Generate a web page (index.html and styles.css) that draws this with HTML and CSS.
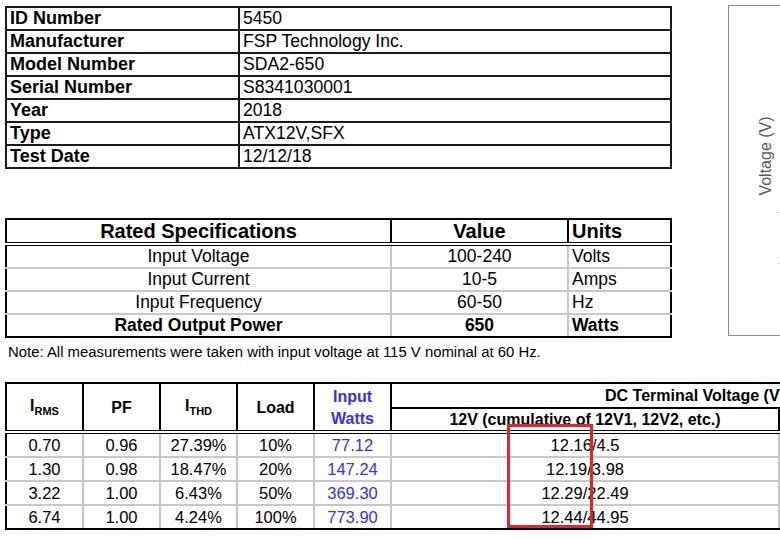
FILE: index.html
```html
<html>
    <head>
        <link rel="stylesheet" href="styles.css">
        <title>PSU Report 5450</title>
    </head>
    <body>
    <div id="page">
        <div id="top">
            <div id="left">
                <table class="info">
                    <tr><td class="lbl">ID Number</td><td>5450</td></tr>
                    <tr><td class="lbl">Manufacturer</td><td>FSP Technology Inc.</td></tr>
                    <tr><td class="lbl">Model Number</td><td>SDA2-650</td></tr>
                    <tr><td class="lbl">Serial Number</td><td>S8341030001</td></tr>
                    <tr><td class="lbl">Year</td><td>2018</td></tr>
                    <tr><td class="lbl">Type</td><td>ATX12V,SFX</td></tr>
                    <tr><td class="lbl">Test Date</td><td>12/12/18</td></tr>
                </table>

                <table class="rated">
                    <tr class="head">
                        <th class="c1">Rated Specifications</th>
                        <th class="c2">Value</th>
                        <th class="c3">Units</th>
                    </tr>
                    <tr><td class="c1">Input Voltage</td><td class="c2">100-240</td><td class="c3">Volts</td></tr>
                    <tr><td class="c1">Input Current</td><td class="c2">10-5</td><td class="c3">Amps</td></tr>
                    <tr><td class="c1">Input Frequency</td><td class="c2">60-50</td><td class="c3">Hz</td></tr>
                    <tr class="bold"><td class="c1">Rated Output Power</td><td class="c2">650</td><td class="c3">Watts</td></tr>
                </table>

                <p class="note">Note: All measurements were taken with input voltage at 115 V nominal at 60 Hz.</p>
            </div>

            <div id="chart">
                <span class="ylabel">Voltage (V)</span>
                <span class="tick t1"></span>
                <span class="tick t2"></span>
            </div>
        </div>

        <div id="perf-wrap">
            <table class="perf">
                <colgroup>
                    <col class="small"><col class="small"><col class="small"><col class="small"><col class="small">
                    <col class="wide">
                    <col class="rest">
                </colgroup>
                <tr class="h1">
                    <th rowspan="2">I<sub>RMS</sub></th>
                    <th rowspan="2">PF</th>
                    <th rowspan="2">I<sub>THD</sub></th>
                    <th rowspan="2">Load</th>
                    <th rowspan="2" class="blue">Input<br>Watts</th>
                    <th colspan="2" class="dc">DC Terminal Voltage (V)</th>
                </tr>
                <tr class="h2">
                    <th>12V (cumulative of 12V1, 12V2, etc.)</th>
                    <th>5V</th>
                </tr>
                <tr><td>0.70</td><td>0.96</td><td>27.39%</td><td>10%</td><td class="blue">77.12</td><td>12.16/4.5</td><td></td></tr>
                <tr><td>1.30</td><td>0.98</td><td>18.47%</td><td>20%</td><td class="blue">147.24</td><td>12.19/3.98</td><td></td></tr>
                <tr><td>3.22</td><td>1.00</td><td>6.43%</td><td>50%</td><td class="blue">369.30</td><td>12.29/22.49</td><td></td></tr>
                <tr><td>6.74</td><td>1.00</td><td>4.24%</td><td>100%</td><td class="blue">773.90</td><td>12.44/44.95</td><td></td></tr>
            </table>
            <div class="mark"></div>
        </div>
    </div>
    </body>
</html>
```

FILE: styles.css
```css
body{
    margin: 0;
    width: 780px;
    height: 538px;
    overflow: hidden;
    font-family: "Liberation Sans", Arial, sans-serif;
    color: #000;
    background: #fff;
}
#page{
    padding: 5px 0 0 5px;
}
#top{
    display: flex;
    align-items: flex-start;
}
#left{
    width: 667px;
    flex-shrink: 0;
}
table{
    border-collapse: collapse;
}
td, th{
    padding: 0;
}

/* id / model table */
.info{
    width: 667px;
    margin-top: 1px;
    border: 2px solid #000;
}
.info td{
    border: 2px solid #1a1a1a;
    height: 21px;
    line-height: 21px;
    padding: 0 3px;
    font-size: 17.6px;
    vertical-align: bottom;
}
.info .lbl{
    width: 225px;
    font-weight: bold;
    font-size: 18px;
}

/* rated specs */
.rated{
    width: 667px;
    margin-top: 49px;
    border: 2px solid #000;
}
.rated th{
    height: 22px;
    line-height: 22px;
    font-size: 20px;
    border: 2px solid #000;
    border-bottom: 4px double #000;
}
.rated td{
    height: 21px;
    line-height: 21px;
    font-size: 17.5px;
    border: 2px solid #c8c8c8;
    text-align: center;
}
.rated tr:last-child td{
    border-bottom: 2px solid #000;
}
.rated .c1{ width: 383px; }
.rated .c2{ width: 175px; }
.rated .c3{ text-align: left; padding-left: 3px; }
.rated .bold td{ font-weight: bold; }
.rated td.c1{ border-left: 2px solid #000; }
.rated td.c3{ border-right: 2px solid #000; }

.note{
    margin: 5px 0 0 3px;
    font-size: 14.9px;
    line-height: 18px;
}

/* chart frame on the right */
#chart{
    position: relative;
    margin-left: 56px;
    width: 100px;
    height: 329px;
    border: 1px solid #8c8c8c;
    border-right: none;
    flex-shrink: 0;
}
.ylabel{
    position: absolute;
    left: 37px;
    top: 150px;
    font-size: 16px;
    color: #595959;
    white-space: nowrap;
    transform: translate(-50%, -50%) rotate(-90deg);
}
.tick{
    position: absolute;
    left: 50px;
    width: 2px;
    height: 1px;
    background: #d9a070;
}
.t1{ top: 206px; }
.t2{ top: 257px; }

/* performance table */
#perf-wrap{
    position: relative;
    margin-top: 21px;
}
.perf{
    width: 995px;
    table-layout: fixed;
    border: 2px solid #000;
}
.perf col.small{ width: 77px; }
.perf col.wide{ width: 388px; }
.perf col.rest{ width: 220px; }
.perf th{
    font-size: 16px;
    font-weight: bold;
    border: 2px solid #000;
    text-align: center;
}
.perf .h1 th{
    height: 23px;
}
.perf .h1 th[rowspan]{
    border-bottom: 4px double #000;
    line-height: 22px;
    padding-top: 2px;
}
.perf .h2 th{
    height: 21px;
    padding-top: 1px;
    border-bottom: 4px double #000;
}
.perf sub{
    font-size: 11px;
    vertical-align: -4px;
}
.perf td{
    height: 22px;
    line-height: 22px;
    font-size: 16.5px;
    text-align: center;
    border: 2px solid #c8c8c8;
}
.perf td:first-child{
    border-left: 2px solid #000;
}
.perf tr:last-child td{
    border-bottom: 2px solid #000;
}
.blue{
    color: #3232f0;
}

/* red highlight drawn over the 12V column */
.mark{
    position: absolute;
    left: 502px;
    top: 42px;
    width: 80px;
    height: 98px;
    border: 3px solid #e3242b;
}
```
